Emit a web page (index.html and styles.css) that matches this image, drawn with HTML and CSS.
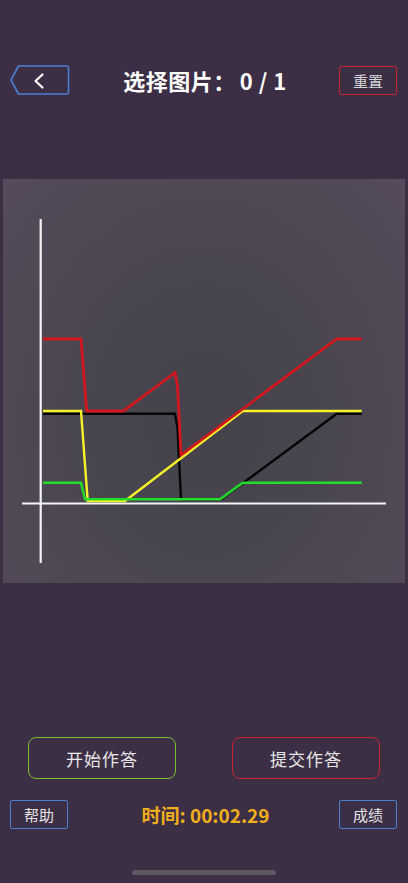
FILE: index.html
```html
<!DOCTYPE html>
<html lang="zh-CN">
<head>
    <meta charset="UTF-8">
    <meta name="viewport" content="width=device-width, initial-scale=1.0">
    <title>选择图片</title>
    <link rel="stylesheet" href="styles.css">
</head>
<body>

    <div class="header">
        <svg class="back-btn" width="60" height="30" viewBox="0 0 60 30">
            <path d="M8.5 1 H56.5 a2 2 0 0 1 2 2 V27 a2 2 0 0 1 -2 2 H8.5 L1 15 Z" fill="none" stroke="#4a7fd0" stroke-width="1.6" stroke-linejoin="round"/>
            <path d="M32.5 9.5 L25.5 16 L32.5 22.5" fill="none" stroke="#ffffff" stroke-width="2.2" stroke-linecap="round" stroke-linejoin="round"/>
        </svg>
        <h1 class="title">选择图片：<span class="count">0 / 1</span></h1>
        <button class="small-btn red">重置</button>
    </div>

    <div class="panel">
        <svg class="chart" width="402" height="404" viewBox="3 179 402 404">
            <!-- axes -->
            <line x1="40.7" y1="219" x2="40.7" y2="563" stroke="#f4f4f4" stroke-width="2.2"/>
            <line x1="22" y1="503.5" x2="386" y2="503.5" stroke="#f4f4f4" stroke-width="2.2"/>

            <!-- black -->
            <polyline points="43,413.7 175,413.7 177.5,428 181,499.3 221,499.3 336.7,413.7 361.7,413.7" fill="none" stroke="#050505" stroke-width="2.4"/>
            <!-- yellow -->
            <polyline points="43,411 81,411 87.7,501 125,501 242.7,411 361.7,411" fill="none" stroke="#f6f22a" stroke-width="2.4"/>
            <!-- green -->
            <polyline points="43,482.7 81,482.7 85,499.3 220,499.3 242.7,482.7 361.7,482.7" fill="none" stroke="#22dd2a" stroke-width="2.4"/>
            <!-- red -->
            <polyline points="43,339 81,339 86.7,411 123.3,411 175,372.7 177.5,386 181,455 336.7,339 361.7,339" fill="none" stroke="#d2181e" stroke-width="2.8"/>
        </svg>
    </div>

    <div class="actions">
        <button class="big-btn green">开始作答</button>
        <button class="big-btn red">提交作答</button>
    </div>

    <div class="footer">
        <button class="small-btn blue">帮助</button>
        <div class="timer">时间: 00:02.29</div>
        <button class="small-btn blue">成绩</button>
    </div>

    <div class="home-bar"></div>

</body>
</html>
```

FILE: styles.css
```css
body {
    margin: 0;
    width: 408px;
    height: 883px;
    overflow: hidden;
    background-color: #3c2e45;
    font-family: "Noto Sans CJK SC", "Noto Sans", sans-serif;
    color: #ffffff;
}
.header {
    display: flex;
    justify-content: space-between;
    align-items: center;
    height: 30px;
    margin-top: 65px;
    padding: 0 11px 0 10px;
}
.back-btn {
    display: block;
}
.title {
    margin: 0;
    font-size: 22px;
    font-weight: 700;
    line-height: 30px;
    letter-spacing: 0.5px;
    margin-left: 1px;
}
.count {
    margin-left: 4px;
}
.small-btn {
    width: 58px;
    height: 29px;
    padding: 0;
    background: transparent;
    border: 1.6px solid #4a7fd0;
    border-radius: 2px;
    color: #e4e4e4;
    font-family: "Noto Sans CJK SC", sans-serif;
    font-size: 15px;
    line-height: 1;
}
.small-btn.red {
    border-color: #c8232e;
    color: #d6d6d6;
}
.panel {
    margin: 84px 3px 0 3px;
    height: 404px;
    background: radial-gradient(ellipse at 50% 60%, #46424b 0%, #4a4650 45%, #554b5b 100%);
}
.chart {
    display: block;
}
.actions {
    display: flex;
    justify-content: space-between;
    padding: 0 28px;
    margin-top: 154px;
}
.big-btn {
    width: 148px;
    height: 42px;
    padding: 0;
    background: transparent;
    border: 1.6px solid #78c030;
    border-radius: 8px;
    color: #e8e8e8;
    font-family: "Noto Sans CJK SC", sans-serif;
    font-size: 17px;
    letter-spacing: 1px;
}
.big-btn.red {
    border-color: #c8232e;
}
.footer {
    display: flex;
    justify-content: space-between;
    align-items: center;
    padding: 0 11px 0 10px;
    margin-top: 21px;
}
.timer {
    color: #f0ae1c;
    font-size: 19px;
    font-weight: 700;
    margin-left: 4px;
}
.home-bar {
    width: 144px;
    height: 5px;
    margin: 41px auto 0 auto;
    border-radius: 3px;
    background-color: #5c5a5e;
}
```
